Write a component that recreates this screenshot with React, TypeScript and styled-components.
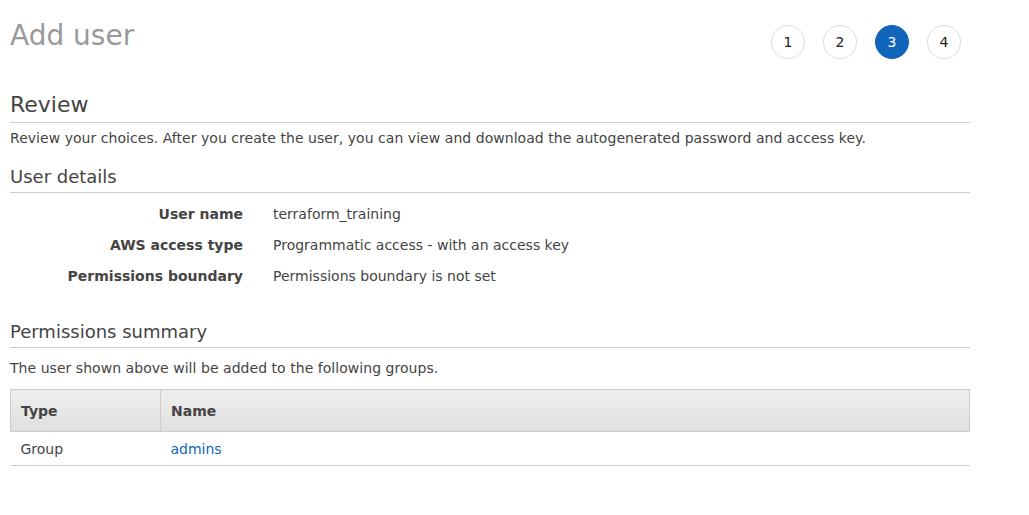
import React from "react";
import styled, { createGlobalStyle } from "styled-components";

const Global = createGlobalStyle`
  html, body { margin: 0; padding: 0; background: #fff; }
  body { font-family: "DejaVu Sans", Verdana, sans-serif; color: #444; }
`;

const Page = styled.div`
  width: 960px;
  padding: 0 10px;
`;

const Header = styled.div`
  display: flex;
  justify-content: space-between;
  align-items: flex-start;
  height: 92px;
`;

const Title = styled.h1`
  margin: 19px 0 0;
  font-size: 28px;
  font-weight: normal;
  color: #999;
  line-height: 34px;
`;

const Steps = styled.div`
  display: flex;
  gap: 18px;
  margin: 25px 9px 0 0;
`;

const Step = styled.div<{ $active?: boolean }>`
  width: 34px;
  height: 34px;
  box-sizing: border-box;
  border-radius: 50%;
  border: 1px solid ${(p) => (p.$active ? "#1166bb" : "#dddddd")};
  background: ${(p) => (p.$active ? "#1166bb" : "#fff")};
  color: ${(p) => (p.$active ? "#fff" : "#222")};
  display: flex;
  align-items: center;
  justify-content: center;
  font-size: 14px;
`;

const Section = styled.section<{ $top?: number }>`
  margin-top: ${(p) => p.$top ?? 0}px;
`;

const SectionTitle = styled.h2<{ $size?: number; $pad?: number }>`
  margin: 0;
  font-weight: normal;
  font-size: ${(p) => p.$size ?? 18}px;
  line-height: ${(p) => Math.round((p.$size ?? 18) * 1.17)}px;
  color: #444;
  padding-bottom: ${(p) => p.$pad ?? 5}px;
  border-bottom: 1px solid #ccc;
`;

const Para = styled.p<{ $top?: number }>`
  margin: ${(p) => p.$top ?? 6}px 0 0;
  font-size: 14px;
  letter-spacing: 0.04px;
  line-height: 18px;
  color: #444;
`;

const Details = styled.div`
  display: grid;
  grid-template-columns: 233px 1fr;
  column-gap: 30px;
  row-gap: 13px;
  margin-top: 12px;
  font-size: 14px;
  line-height: 18px;
`;

const Label = styled.div`
  text-align: right;
  font-weight: bold;
  color: #444;
`;

const Value = styled.div`
  color: #444;
`;

const Table = styled.table`
  width: 960px;
  border-collapse: collapse;
  margin-top: 12px;
  font-size: 14px;
`;

const Th = styled.th<{ $w?: number }>`
  text-align: left;
  height: 42px;
  box-sizing: border-box;
  padding: 0 10px;
  border: 1px solid #ccc;
  background: linear-gradient(#efefef, #dfdfdf);
  font-weight: bold;
  color: #444;
  width: ${(p) => (p.$w ? `${p.$w}px` : "auto")};
`;

const Td = styled.td`
  padding: 0 10px;
  height: 33px;
  border-bottom: 1px solid #ccc;
  color: #444;
`;

const Link = styled.a`
  color: #1166bb;
  text-decoration: none;
`;

export default function App() {
  return (
    <>
      <Global />
      <Page>
        <Header>
          <Title>Add user</Title>
          <Steps>
            <Step>1</Step>
            <Step>2</Step>
            <Step $active>3</Step>
            <Step>4</Step>
          </Steps>
        </Header>
        <Section>
          <SectionTitle $size={22} $pad={4}>Review</SectionTitle>
          <Para>
            Review your choices. After you create the user, you can view and download the autogenerated password and access key.
          </Para>
        </Section>
        <Section $top={19}>
          <SectionTitle>User details</SectionTitle>
          <Details>
            <Label>User name</Label>
            <Value>terraform_training</Value>
            <Label>AWS access type</Label>
            <Value>Programmatic access - with an access key</Value>
            <Label>Permissions boundary</Label>
            <Value>Permissions boundary is not set</Value>
          </Details>
        </Section>
        <Section $top={36}>
          <SectionTitle>Permissions summary</SectionTitle>
          <Para $top={11}>The user shown above will be added to the following groups.</Para>
          <Table>
            <thead>
              <tr>
                <Th $w={150}>Type</Th>
                <Th>Name</Th>
              </tr>
            </thead>
            <tbody>
              <tr>
                <Td>Group</Td>
                <Td>
                  <Link href="#">admins</Link>
                </Td>
              </tr>
            </tbody>
          </Table>
        </Section>
      </Page>
    </>
  );
}
